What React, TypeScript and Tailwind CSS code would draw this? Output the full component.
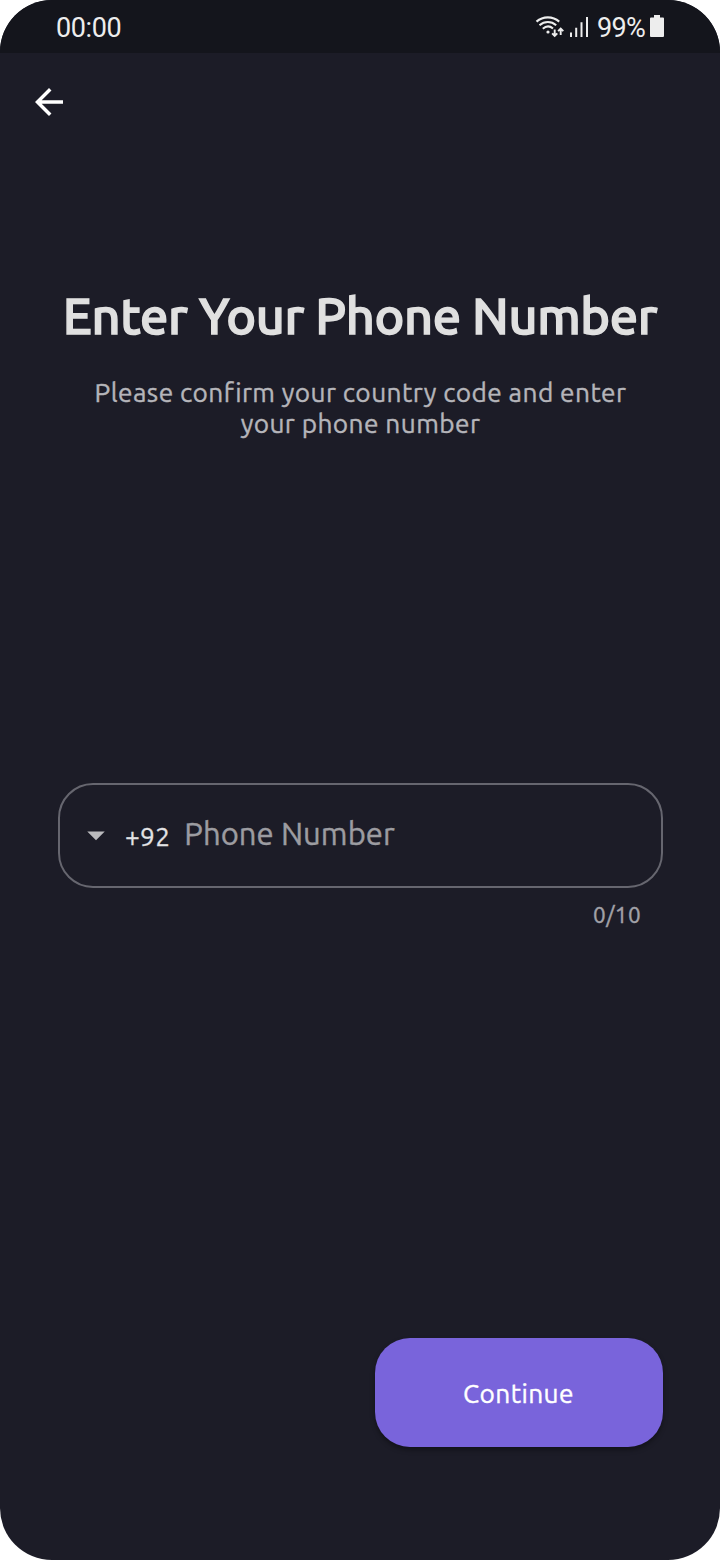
import type { ReactNode } from 'react';

function Icon({ className, viewBox, children }: { className: string; viewBox: string; children: ReactNode }) {
  return (
    <svg className={className} viewBox={viewBox} fill="currentColor" aria-hidden="true">
      {children}
    </svg>
  );
}

function StatusBar() {
  return (
    <header className="flex h-[53px] shrink-0 items-center justify-between bg-[#14151c] pr-[56px] pl-[56px] font-['Roboto',sans-serif] text-[27px] leading-[50px] text-[#ededed]">
      <span className="pt-[2px] tracking-[-0.4px]">00:00</span>
      <div className="flex items-center">
        <Icon className="mb-[2px] h-[24px] w-[30px]" viewBox="0 0 30 24">
          <g fill="none" stroke="currentColor" strokeWidth="2.1">
            <path d="M1.5 7.6C8 1.9 17.7 1.9 24.2 7.6" />
            <path d="M4.5 11.2C9.5 6.9 16.2 6.9 21.2 11.2" />
            <path d="M7.8 14.7C11 12 15 12 18 14.5" />
            <path strokeWidth="1.9" d="M19.7 15.5V22M17.1 19.4L19.7 22L22.3 19.4M25.7 21V14.5M23.1 17.2L25.7 14.6L28.3 17.2" />
          </g>
          <circle cx="13" cy="18" r="1.6" />
        </Icon>
        <Icon className="ml-[5px] h-[20px] w-[18px]" viewBox="0 0 18 20">
          <path d="M0 15.5h2V20H0zM5.2 10.7h2V20h-2zM10.5 5.2h2V20h-2zM16 0h2v20h-2z" />
        </Icon>
        <span className="ml-[9px] pt-[2px] tracking-[-0.7px]">99%</span>
        <Icon className="mb-[1px] ml-[5px] h-[22px] w-[14px]" viewBox="0 0 14 22">
          <path d="M4 0h6v2.5h3q1 0 1 1V21q0 1-1 1H1q-1 0-1-1V3.5q0-1 1-1h3z" />
        </Icon>
      </div>
    </header>
  );
}

export default function App() {
  return (
    <div className="h-[1560px] w-[720px] bg-white">
      <main className="flex h-full flex-col overflow-hidden rounded-[52px] bg-[#1c1c27] font-['Ubuntu','Noto_Sans',sans-serif]">
        <StatusBar />
        <button className="mt-[28px] ml-[28px] size-[42px] shrink-0 text-white" aria-label="Back">
          <Icon className="size-full" viewBox="0 0 24 24">
            <path d="M20 11H7.83l5.59-5.59L12 4l-8 8 8 8 1.41-1.41L7.83 13H20z" />
          </Icon>
        </button>

        <section className="mt-[163px] flex flex-col items-center whitespace-nowrap">
          <h1 className="text-[50.5px] leading-[60px] font-medium tracking-[-0.4px] text-[#e0e0e0] [-webkit-text-stroke:1.4px_#e0e0e0]">
            Enter Your Phone Number
          </h1>
          <p className="mt-[31px] pl-px text-center text-[26.25px] leading-[31px] tracking-[0.42px] text-[#b5b5ba] [-webkit-text-stroke:0.4px_#b5b5ba]">
            Please confirm your country code and enter
            <br />
            your phone number
          </p>
        </section>

        <section className="mt-[344px] pr-[57px] pl-[58px]">
          <div className="flex h-[105px] items-center rounded-[35px] border-2 border-[#66666f] pl-[15px]">
            <Icon className="mb-[2px] size-[42px] text-[#bababd]" viewBox="0 0 24 24">
              <path d="M7 10l5 5 5-5z" />
            </Icon>
            <span className="mt-[2px] ml-[8px] text-[26.25px] leading-[30px] tracking-[0.3px] text-[#e3e3e5] [-webkit-text-stroke:0.3px_#e3e3e5]">+92</span>
            <span className="mb-[3px] ml-[14px] text-[31px] leading-[40px] tracking-[0.05px] text-[#9c9ca1] [-webkit-text-stroke:0.4px_#9c9ca1]">Phone Number</span>
          </div>
          <div className="mt-[12px] pr-[22px] text-right text-[22.5px] leading-[30px] tracking-[0.4px] text-[#a2a2a7] [-webkit-text-stroke:0.4px_#a2a2a7]">0/10</div>
        </section>

        <button className="mt-auto mr-[57px] mb-[113px] h-[109px] w-[288px] self-end rounded-[35px] bg-[#7964db] pt-[3px] pr-px text-[26.25px] tracking-[0.4px] text-white shadow-[0_3px_5px_rgba(0,0,0,0.35)] [-webkit-text-stroke:0.4px_#ffffff]">
          Continue
        </button>
      </main>
    </div>
  );
}
